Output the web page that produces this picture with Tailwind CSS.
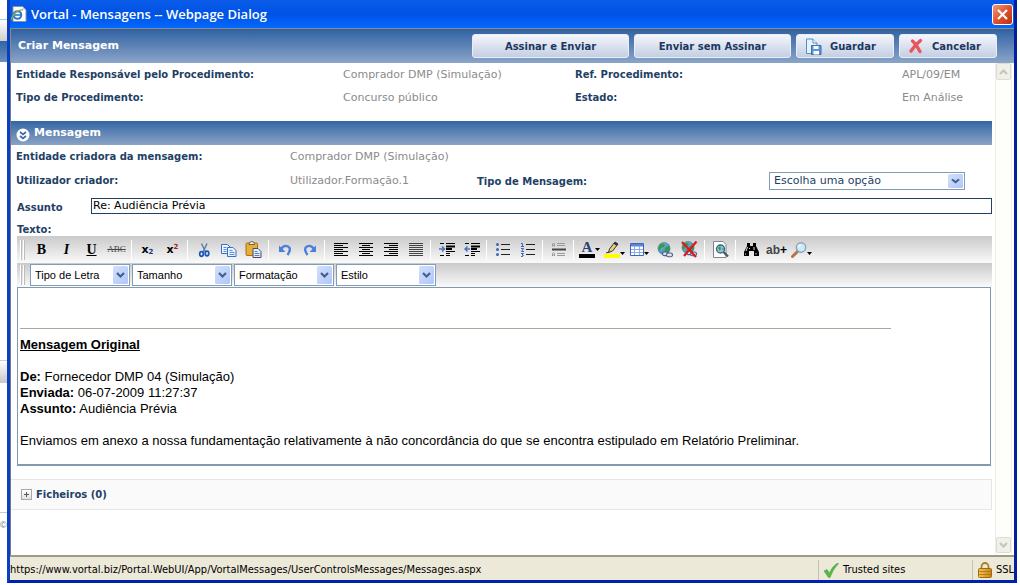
<!DOCTYPE html>
<html lang="pt">
<head>
<meta charset="utf-8">
<title>Vortal - Mensagens -- Webpage Dialog</title>
<script src="https://cdn.jsdelivr.net/npm/@tailwindcss/browser@4"></script>
</head>
<body class="bg-white">
<svg class="absolute size-0" aria-hidden="true">
  <defs>
    <linearGradient id="combo" x1="0" y1="0" x2="1" y2="1"><stop offset="0" stop-color="#d3e0fd"/><stop offset="1" stop-color="#b0c6f7"/></linearGradient>
    <linearGradient id="globeg" x1="0" y1="0" x2="1" y2="1"><stop offset="0" stop-color="#8fd0f0"/><stop offset="1" stop-color="#1f6f9e"/></linearGradient>
    <linearGradient id="gold" x1="0" y1="0" x2="1" y2="0"><stop offset="0" stop-color="#f5c453"/><stop offset="1" stop-color="#c98512"/></linearGradient>
  </defs>
  <symbol id="combo-arrow" viewBox="0 0 15 18" preserveAspectRatio="none"><rect width="15" height="18" rx="1.5" fill="url(#combo)"/><path d="M4 7l3.500 3.500L11 7" fill="none" stroke="#42608f" stroke-width="2.200"/></symbol>
  <symbol id="globe" viewBox="0 0 16 16"><circle cx="7" cy="6.500" r="6" fill="url(#globeg)" stroke="#2a6a86" stroke-width=".6"/><path d="M3 2.500q3-2 5 0l-1 2.500-3 1-1 3-2-2zM8 6l4-2 1 3-3 4-2-1z" fill="#3a9a4a"/><g fill="#dde3ee" stroke="#4b5d80" stroke-width="1.100"><rect x="5.500" y="10" width="5.500" height="3.600" rx="1.800"/><rect x="9.500" y="11" width="6" height="3.800" rx="1.900"/></g></symbol>
  <symbol id="caret" viewBox="0 0 5 3"><path d="M0 0h5L2.500 3z" fill="#000"/></symbol>
</svg>

<div class="flex h-screen w-full overflow-hidden font-['DejaVu_Sans',Verdana,sans-serif]">
  <div class="flex w-[7px] shrink-0 flex-col bg-white font-['Liberation_Sans',Arial,sans-serif] text-[9px] text-gray-500" aria-hidden="true">
    <div class="h-5 border-b border-[#a9c6da]"></div>
    <div class="h-[21px] bg-linear-to-b from-white to-[#cfcfcf]"></div>
    <div class="h-[21px] bg-linear-to-b from-[#2e64a6] to-[#6e8fbc]"></div>
    <div class="h-[299px] border-b border-[#cfcfcf]"></div>
    <div class="h-[32px]"><div class="h-[22px] bg-linear-to-b from-white to-[#c8c8c8]"></div></div>
    <div class="h-[120px] border-b border-[#b9cbe0]"></div>
    <div class="leading-6">©</div>
  </div>

  <div class="mr-[3px] mb-[2px] flex min-w-0 flex-1 flex-col border-r-3 border-b-3 border-l-3 border-[#0a3fc4] border-r-[#0020a0] border-b-[#0020b0] bg-white">
    <header class="flex h-7 shrink-0 items-center bg-linear-to-b from-[#0a5be8] via-[#0053e4] to-[#0468ff] pr-px pl-px">
      <svg class="size-4" viewBox="0 0 16 16"><path d="M2 .5h9.500L15 4v11.500H2z" fill="#fff" stroke="#8a93a5"/><path d="M11.500.5V4H15z" fill="#cdd6e6"/><circle cx="6.500" cy="9" r="3.800" fill="none" stroke="#2a7ad0" stroke-width="2"/><path d="M3.500 9h6.500" stroke="#2a7ad0" stroke-width="1.600"/><path d="M1 14C-1 11 7 3 12 4" fill="none" stroke="#8bb42d" stroke-width="1.200"/></svg>
      <h1 class="flex-1 pt-[2px] pl-[4px] font-['Open_Sans','Trebuchet_MS',sans-serif] text-[13px] font-semibold text-white">Vortal - Mensagens -- Webpage Dialog</h1>
      <button aria-label="Fechar" class="flex size-[21px] items-center justify-center rounded-[3px] border border-white bg-linear-to-br from-[#f0997c] via-[#e0512c] to-[#b83210]"><svg class="size-[13px]" viewBox="0 0 13 13"><path d="M2 2l9 9M11 2l-9 9" stroke="#fff" stroke-width="2.200"/></svg></button>
    </header>

    <div class="flex h-[35px] shrink-0 items-center border-t border-l border-[#8c8c80] bg-linear-to-b from-[#2f61a3] to-[#8ba5c8] pr-[17px] pl-[7px]">
      <h2 class="flex-1 text-[11px] font-bold text-white">Criar Mensagem</h2>
      <div class="flex gap-[5px] text-[10px] font-bold text-[#1d3761]">
        <button class="h-6 w-[157px] rounded-[3px] border border-[#e9eef7] bg-linear-to-b from-[#f4f6fb] to-[#c3cfe3]">Assinar e Enviar</button>
        <button class="h-6 w-[157px] rounded-[3px] border border-[#e9eef7] bg-linear-to-b from-[#f4f6fb] to-[#c3cfe3]">Enviar sem Assinar</button>
        <button class="flex h-6 w-[98px] items-center gap-2 rounded-[3px] border border-[#e9eef7] bg-linear-to-b from-[#f4f6fb] to-[#c3cfe3] pl-2"><svg class="size-[17px]" viewBox="0 0 17 17"><path d="M1.500 1H8l4 4v10.500H1.500z" fill="#e6f1fc" stroke="#4f8fd0"/><path d="M8 1v4h4" fill="#fff" stroke="#4f8fd0"/><path d="M6.500 7.500h9.500v9H6.500z" fill="#5a96d8" stroke="#3a6fb4"/><path d="M8.500 8h5v3h-5zM8.500 13h5.500v3.500H8.500z" fill="#fff"/></svg>Guardar</button>
        <button class="flex h-6 w-[98px] items-center gap-2 rounded-[3px] border border-[#e9eef7] bg-linear-to-b from-[#f4f6fb] to-[#c3cfe3] pl-2"><svg class="size-[16px]" viewBox="0 0 16 16"><path d="M4.500 3q3 2.500 7.500 10.500M12.500 2.500Q7 7 3 13" fill="none" stroke="#e8555c" stroke-width="3.400" stroke-linecap="round"/></svg>Cancelar</button>
      </div>
    </div>

    <div class="flex min-h-0 flex-1 border-l border-[#777]">
      <main class="mr-[3px] min-w-0 flex-1 text-[10px] text-[#8b8b8b]">
        <dl class="grid grid-cols-[327px_232px_327px_1fr] pl-[5px] leading-[23px]">
          <dt class="font-bold text-[#233f66]">Entidade Responsável pelo Procedimento:</dt><dd class="text-[11px]">Comprador DMP (Simulação)</dd>
          <dt class="font-bold text-[#233f66]">Ref. Procedimento:</dt><dd class="text-[11px]">APL/09/EM</dd>
          <dt class="font-bold text-[#233f66]">Tipo de Procedimento:</dt><dd class="text-[11px]">Concurso público</dd>
          <dt class="font-bold text-[#233f66]">Estado:</dt><dd class="text-[11px]">Em Análise</dd>
        </dl>

        <div class="mt-3 flex h-6 items-center gap-1 bg-linear-to-b from-[#3366a5] to-[#8ba3c4] pl-[5px]">
          <svg class="mt-1 size-[14px]" viewBox="0 0 14 14"><circle cx="7" cy="7" r="6.500" fill="#fff"/><path d="M4 4l3 2.500L10 4M4 8l3 2.500L10 8" fill="none" stroke="#3d6aa5" stroke-width="1.700"/></svg>
          <h3 class="text-[11px] font-bold text-white">Mensagem</h3>
        </div>

        <div class="grid grid-cols-[274px_187px_292px_1fr] items-center pl-[5px]">
          <span class="leading-6 font-bold text-[#233f66]">Entidade criadora da mensagem:</span><span class="col-span-3 text-[11px] leading-6">Comprador DMP (Simulação)</span>
          <span class="leading-6 font-bold text-[#233f66]">Utilizador criador:</span><span class="text-[11px] leading-6">Utilizador.Formação.1</span>
          <label for="tipo" class="font-bold text-[#233f66]">Tipo de Mensagem:</label>
          <div class="relative h-[18px] w-[196px]">
            <select id="tipo" class="h-[18px] w-full appearance-none border border-[#7f9db9] bg-white pl-1 text-[11px] leading-4 text-[#233f66]"><option>Escolha uma opção</option></select>
            <svg class="pointer-events-none absolute top-[2px] right-[2px] h-[14px] w-[15px]"><use href="#combo-arrow"/></svg>
          </div>
        </div>

        <div class="mt-[5px] flex pl-[6px]">
          <label for="assunto" class="w-[74px] pt-[2px] leading-4 font-bold text-[#233f66]">Assunto</label>
          <input id="assunto" value="Re: Audiência Prévia" class="h-4 min-w-0 flex-1 border border-[#233f66] bg-white px-px text-[11px] text-black">
        </div>
        <div class="pt-2 pl-[6px] leading-3 font-bold text-[#233f66]" id="texto">Texto:</div>

        <section class="ml-[6px]">
          <div class="flex h-[27px] items-center bg-linear-to-b from-[#cacaca] to-[#fafafa] pl-[3px] text-black">
            <div class="mr-[4px] flex h-5 w-[5px] justify-between"><i class="w-[2px] border-r border-[#bdbdbd] bg-white"></i><i class="w-[2px] border-r border-[#bdbdbd] bg-white"></i></div>
            <button class="w-[25px] font-['Liberation_Serif',serif] text-[14px] font-bold">B</button>
            <button class="w-[25px] font-['Liberation_Serif',serif] text-[14px] font-bold italic">I</button>
            <button class="w-[25px] font-['Liberation_Serif',serif] text-[14px] font-bold underline">U</button>
            <button class="w-[25px] font-['Liberation_Serif',serif] text-[9px] text-[#444] line-through">ABC</button>
            <i class="mr-[3px] ml-[2px] h-5 w-px bg-white"></i>
            <button class="w-[25px] text-[11px] leading-3 font-bold">x<sub class="text-[7px] text-[#1c2f86]">2</sub></button>
            <button class="w-[25px] text-[11px] leading-3 font-bold">x<sup class="text-[7px] text-[#a02020]">2</sup></button>
            <i class="mr-[3px] ml-[2px] h-5 w-px bg-white"></i>
            <button aria-label="Cortar" class="flex w-[25px] justify-center"><svg class="size-4" viewBox="0 0 16 16"><path d="M5.500 1.500L9.500 10M11 1.500L7 10" stroke="#5b7fae" stroke-width="1.500"/><g fill="none" stroke="#1d55b8" stroke-width="1.700"><ellipse cx="5.500" cy="12" rx="1.800" ry="2.300"/><ellipse cx="11" cy="11.500" rx="1.800" ry="2.300"/></g></svg></button>
            <button aria-label="Copiar" class="flex w-[25px] justify-center"><svg class="size-4" viewBox="0 0 16 16"><g fill="#eaf3ff" stroke="#3a6fc4"><path d="M.5 2.500h6l3 3v6h-9z"/><path d="M6.500 5.500h5.500l3 3v6H6.500z"/></g><path d="M2.500 5.500h3M2.500 7.500h3M2.500 9.500h3M8.500 8.500h3M8.500 10.500h5M8.500 12.500h5" stroke="#5a8fd8"/></svg></button>
            <button aria-label="Colar" class="flex w-[25px] justify-center"><svg class="size-[17px]" viewBox="0 0 17 17"><rect x="1" y="2" width="11.500" height="12.500" rx="1" fill="#e9ad3a" stroke="#a8701a"/><path d="M4 3.500Q4 .5 6.800.5T9.500 3.500z" fill="#eee" stroke="#70633f"/><path d="M8 7.500h5l3 3v6H8z" fill="#eaf0fa" stroke="#3c4f70"/><path d="M9.500 10.500h3M9.500 12.500h5M9.500 14.500h5" stroke="#5b7fbc"/></svg></button>
            <i class="mr-[3px] ml-[2px] h-5 w-px bg-white"></i>
            <button aria-label="Anular" class="flex w-[25px] justify-center"><svg class="size-[14px]" viewBox="0 0 14 14"><path d="M3 6q3-4.500 7-2.500t-.5 8.500" fill="none" stroke="#4a7fdc" stroke-width="2.400"/><path d="M1 2.500v6.500h6.500z" fill="#4a7fdc"/></svg></button>
            <button aria-label="Refazer" class="flex w-[25px] justify-center"><svg class="size-[14px]" viewBox="0 0 14 14"><path d="M11 6Q8 1.500 4 3.500t.5 8.500" fill="none" stroke="#4a7fdc" stroke-width="2.400"/><path d="M13 2.500v6.500H6.500z" fill="#4a7fdc"/></svg></button>
            <i class="mr-[3px] ml-[2px] h-5 w-px bg-white"></i>
            <button aria-label="Alinhar à esquerda" class="flex w-[25px] justify-center"><svg class="h-[13px] w-[14px]" viewBox="0 0 14 13"><path d="M0 .5h14M0 2.500h9M0 4.500h14M0 6.500h9M0 8.500h14M0 10.500h9M0 12.500h14" stroke="#000"/></svg></button>
            <button aria-label="Centrar" class="flex w-[25px] justify-center"><svg class="h-[13px] w-[14px]" viewBox="0 0 14 13"><path d="M0 .5h14M3 2.500h8M0 4.500h14M3 6.500h8M0 8.500h14M3 10.500h8M0 12.500h14" stroke="#000"/></svg></button>
            <button aria-label="Alinhar à direita" class="flex w-[25px] justify-center"><svg class="h-[13px] w-[14px]" viewBox="0 0 14 13"><path d="M0 .5h14M5 2.500h9M0 4.500h14M5 6.500h9M0 8.500h14M5 10.500h9M0 12.500h14" stroke="#000"/></svg></button>
            <button aria-label="Justificar" class="flex w-[25px] justify-center"><svg class="h-[13px] w-[14px]" viewBox="0 0 14 13"><path d="M0 .5h14M0 2.500h14M0 4.500h14M0 6.500h14M0 8.500h14M0 10.500h14M0 12.500h14" stroke="#444"/></svg></button>
            <i class="mr-[3px] ml-[2px] h-5 w-px bg-white"></i>
            <button aria-label="Aumentar avanço" class="flex w-[25px] justify-center"><svg class="h-[13px] w-4" viewBox="0 0 16 13"><path d="M1 .5h4M7 .5h9M1 12.500h4M7 12.500h4M7 8.500h9M7 10.500h4" stroke="#000"/><path d="M7 3.500h9M7 6h6" stroke="#000" stroke-width="2"/><path d="M0 6h5M3 3.500L5.500 6 3 8.500" fill="none" stroke="#4a74b8" stroke-width="1.500"/></svg></button>
            <button aria-label="Diminuir avanço" class="flex w-[25px] justify-center"><svg class="h-[13px] w-4" viewBox="0 0 16 13"><path d="M1 .5h4M7 .5h9M1 12.500h4M7 12.500h4M7 8.500h9M7 10.500h4" stroke="#000"/><path d="M7 3.500h9M7 6h6" stroke="#000" stroke-width="2"/><path d="M1 6h5M3.500 3.500L1 6l2.500 2.500" fill="none" stroke="#4a74b8" stroke-width="1.500"/></svg></button>
            <i class="mr-[3px] ml-[2px] h-5 w-px bg-white"></i>
            <button aria-label="Lista" class="flex w-[25px] justify-center"><svg class="h-[13px] w-[14px]" viewBox="0 0 14 13"><path d="M5 1.500h9M5 6.500h9M5 11.500h9" stroke="#222"/><g fill="#3e66b8"><circle cx="1.500" cy="1.500" r="1.500"/><circle cx="1.500" cy="6.500" r="1.500"/><circle cx="1.500" cy="11.500" r="1.500"/></g></svg></button>
            <button aria-label="Lista numerada" class="flex w-[25px] justify-center"><svg class="h-[14px] w-[14px]" viewBox="0 0 14 14"><path d="M5 1.500h9M5 6.500h9M5 11.500h9" stroke="#222"/><path d="M0 .5h1.500v3M0 3.500h3M0 5.500h2.500L.5 8.500H3M0 10.500h2.500L1 12l1.500.5-1 1H0" fill="none" stroke="#3e66b8"/></svg></button>
            <i class="mr-[3px] ml-[2px] h-5 w-px bg-white"></i>
            <button aria-label="Linha horizontal" class="flex w-[25px] justify-center"><svg class="h-[13px] w-[14px]" viewBox="0 0 14 13"><path d="M5 .5h8M5 2.500h8M5 10.500h8M5 12.500h8M.5 3.500V1l1-1 1 1v2.500M.5 2.500h2M.5 13v-2.500l1-1 1 1V13M.5 12h2" fill="none" stroke="#999"/><path d="M0 6.500h14" stroke="#444" stroke-width="2"/></svg></button>
            <i class="mr-[3px] ml-[2px] h-5 w-px bg-white"></i>
            <button aria-label="Cor do texto" class="flex w-[25px] items-center justify-center"><span class="w-4 border-b-4 border-black font-['Liberation_Serif',serif] text-[15px] leading-[13px] font-bold text-[#2a4272]">A</span><svg class="h-[3px] w-[5px]"><use href="#caret"/></svg></button>
            <button aria-label="Cor de fundo" class="flex w-[25px] items-center justify-center"><svg class="h-[17px] w-4" viewBox="0 0 16 17"><path d="M0 13h16v4H0z" fill="#ff0"/><path d="M11 1l3 2-5.500 7-4 1.500L5.500 8z" fill="#f0cf70" stroke="#333"/><path d="M9.500 2.500l3 2.500 1.500-2-3-2z" fill="#26334e"/><path d="M2 12l3-1" stroke="#333"/></svg><svg class="mt-2 h-[3px] w-[5px]"><use href="#caret"/></svg></button>
            <button aria-label="Tabela" class="flex w-[25px] items-center justify-center"><svg class="h-[13px] w-[14px]" viewBox="0 0 14 13"><path d="M.5.5h13v12H.5z" fill="#fff" stroke="#3e66c0"/><path d="M1 1h12v2.500H1z" fill="#5b86dc"/><path d="M1 6.500h12M1 9.500h12M4.500 3v9M9.500 3v9" stroke="#8cabe6"/></svg><svg class="mt-2 h-[3px] w-[5px]"><use href="#caret"/></svg></button>
            <button aria-label="Inserir ligação" class="flex w-[25px] justify-center"><svg class="size-4"><use href="#globe"/></svg></button>
            <button aria-label="Remover ligação" class="flex w-[25px] justify-center"><svg class="size-[17px]" viewBox="0 0 17 17"><use href="#globe" width="16" height="16"/><path d="M1 1l14 15M15.500.5L3 15" stroke="#e01818" stroke-width="2.300"/></svg></button>
            <i class="mr-[3px] ml-[2px] h-5 w-px bg-white"></i>
            <button aria-label="Pré-visualizar" class="flex w-[25px] justify-center"><svg class="h-[17px] w-4" viewBox="0 0 16 17"><path d="M.5.5H10l3 3v13H.5z" fill="#fff" stroke="#7d8794"/><circle cx="7.500" cy="8" r="4" fill="#8cc8e6" stroke="#44606e" stroke-width="1.300"/><path d="M5 7l2-2 1 2-1 3zM8.500 8l2-1v2z" fill="#3b9448"/><path d="M10.500 11l4.500 4.500" stroke="#4c5a66" stroke-width="2.400"/></svg></button>
            <i class="mr-[3px] ml-[2px] h-5 w-px bg-white"></i>
            <button aria-label="Localizar" class="flex w-[25px] justify-center"><svg class="h-[13px] w-[15px]" viewBox="0 0 15 13"><path d="M3 0h3v3h3V0h3v3l3 6v4h-5V8H5v5H0V9l3-6z" fill="#000"/><path d="M3.500 4L2 8M10 4v3M1.500 10.500v1M12 10v1.500M5.500 5v1" stroke="#ddd"/></svg></button>
            <button class="w-[25px] text-center font-['Liberation_Sans',sans-serif] text-[12px] font-bold text-[#444]">ab<span class="text-black">+</span></button>
            <button aria-label="Zoom" class="flex w-[25px] items-center justify-center"><svg class="size-4" viewBox="0 0 16 16"><path d="M1.500 14.500l5-5" stroke="#b3754a" stroke-width="3" stroke-linecap="round"/><circle cx="10" cy="5.500" r="4.700" fill="#cdeafa" stroke="#88a4bd" stroke-width="1.400"/><path d="M7.500 5Q8 3 10 3" fill="none" stroke="#fff" stroke-width="1.200"/></svg><svg class="mt-2 h-[3px] w-[5px]"><use href="#caret"/></svg></button>
          </div>

          <div class="flex h-6 items-center gap-[2px] bg-linear-to-b from-[#cacaca] to-[#fafafa] pl-[3px] font-['Liberation_Sans',Arial,sans-serif]">
            <div class="mr-[3px] flex h-5 w-[5px] justify-between"><i class="w-[2px] border-r border-[#bdbdbd] bg-white"></i><i class="w-[2px] border-r border-[#bdbdbd] bg-white"></i></div>
            <div class="relative h-[22px] w-[100px]"><select aria-label="Tipo de Letra" class="h-full w-full appearance-none border border-[#7f9db9] bg-white pl-1 text-[11px] text-black"><option>Tipo de Letra</option></select><svg class="pointer-events-none absolute top-[2px] right-[2px] h-[18px] w-[15px]"><use href="#combo-arrow"/></svg></div>
            <div class="relative h-[22px] w-[100px]"><select aria-label="Tamanho" class="h-full w-full appearance-none border border-[#7f9db9] bg-white pl-1 text-[11px] text-black"><option>Tamanho</option></select><svg class="pointer-events-none absolute top-[2px] right-[2px] h-[18px] w-[15px]"><use href="#combo-arrow"/></svg></div>
            <div class="relative h-[22px] w-[100px]"><select aria-label="Formatação" class="h-full w-full appearance-none border border-[#7f9db9] bg-white pl-1 text-[11px] text-black"><option>Formatação</option></select><svg class="pointer-events-none absolute top-[2px] right-[2px] h-[18px] w-[15px]"><use href="#combo-arrow"/></svg></div>
            <div class="relative h-[22px] w-[100px]"><select aria-label="Estilo" class="h-full w-full appearance-none border border-[#7f9db9] bg-white pl-1 text-[11px] text-black"><option>Estilo</option></select><svg class="pointer-events-none absolute top-[2px] right-[2px] h-[18px] w-[15px]"><use href="#combo-arrow"/></svg></div>
          </div>

          <div role="textbox" aria-multiline="true" aria-labelledby="texto" contenteditable="true" spellcheck="false" class="mr-px h-[179px] border border-b-2 border-[#8399ae] px-[2px] pt-10 font-['Liberation_Sans',Arial,sans-serif] text-[13px] leading-4 text-black">
            <hr class="mb-2 w-[90%] border-[#aca899]">
            <p class="mb-4 font-bold underline">Mensagem Original</p>
            <p><b>De:</b> Fornecedor DMP 04 (Simulação)</p>
            <p><b>Enviada:</b> 06-07-2009 11:27:37</p>
            <p class="mb-4"><b>Assunto:</b> Audiência Prévia</p>
            <p>Enviamos em anexo a nossa fundamentação relativamente à não concordância do que se encontra estipulado em Relatório Preliminar.</p>
          </div>
        </section>

        <div class="mt-[13px] flex h-[31px] items-center gap-1 border border-l-0 border-[#e6e6e6] bg-[#fafafa] pl-[10px]">
          <button aria-label="Expandir" class="flex size-[11px] items-center justify-center border border-[#a8a8a8] bg-linear-to-b from-white to-[#e4e0dc]"><svg class="size-[5px]" viewBox="0 0 5 5"><path d="M0 2.500h5M2.500 0v5" stroke="#555"/></svg></button>
          <span class="font-bold text-[#233f66]">Ficheiros (0)</span>
        </div>
      </main>

      <div class="mr-[2px] flex w-[17px] flex-col justify-between border-x border-[#eeeee8] bg-[#fefefb]" aria-hidden="true">
        <div class="flex h-[17px] items-center justify-center rounded-[2px] border border-[#dddcd0] bg-[#f0efe8]"><svg class="h-[6px] w-[9px]" viewBox="0 0 9 6"><path d="M1 5l3.500-3.500L8 5" fill="none" stroke="#c4c4b8" stroke-width="2"/></svg></div>
        <div class="mb-[2px] flex h-[16px] items-center justify-center rounded-[2px] border border-[#dddcd0] bg-[#f0efe8]"><svg class="h-[6px] w-[9px]" viewBox="0 0 9 6"><path d="M1 1l3.500 3.500L8 1" fill="none" stroke="#c4c4b8" stroke-width="2"/></svg></div>
      </div>
    </div>

    <footer class="flex h-[25px] shrink-0 items-center overflow-hidden border-t-2 border-[#9d9a88] bg-[#ece9d8] pt-[3px] font-['DejaVu_Sans_Condensed','DejaVu_Sans',Tahoma,sans-serif] text-[11px] whitespace-nowrap text-black">
      <span class="min-w-0 flex-1">https://www.vortal.biz/Portal.WebUI/App/VortalMessages/UserControlsMessages/Messages.aspx</span>
      <span class="flex h-5 w-[154px] items-center gap-1 border-l border-[#c5c2b0] pl-[5px]"><svg class="size-[15px]" viewBox="0 0 15 15"><path d="M0 8l3-1.500 2.500 3.500Q8 3.500 13.500 0l1 .5Q9 6 6 14.500H4.500z" fill="#55b948" stroke="#3d9a35" stroke-width=".5"/></svg>Trusted sites</span>
      <span class="flex h-5 w-[42px] items-center gap-1 border-l border-[#c5c2b0] pl-[5px]"><svg class="h-4 w-[14px] shrink-0" viewBox="0 0 14 16"><path d="M3.500 7V4.500a3.500 3.500 0 0 1 7 0V7" fill="none" stroke="#a8812f" stroke-width="1.800"/><rect x=".5" y="6.500" width="13" height="9" rx="1" fill="url(#gold)" stroke="#a06a10"/><path d="M1 9.500h12M1 12.500h12" stroke="#a87414" stroke-width=".8"/></svg>SSL</span>
    </footer>
  </div>
</div>
</body>
</html>
